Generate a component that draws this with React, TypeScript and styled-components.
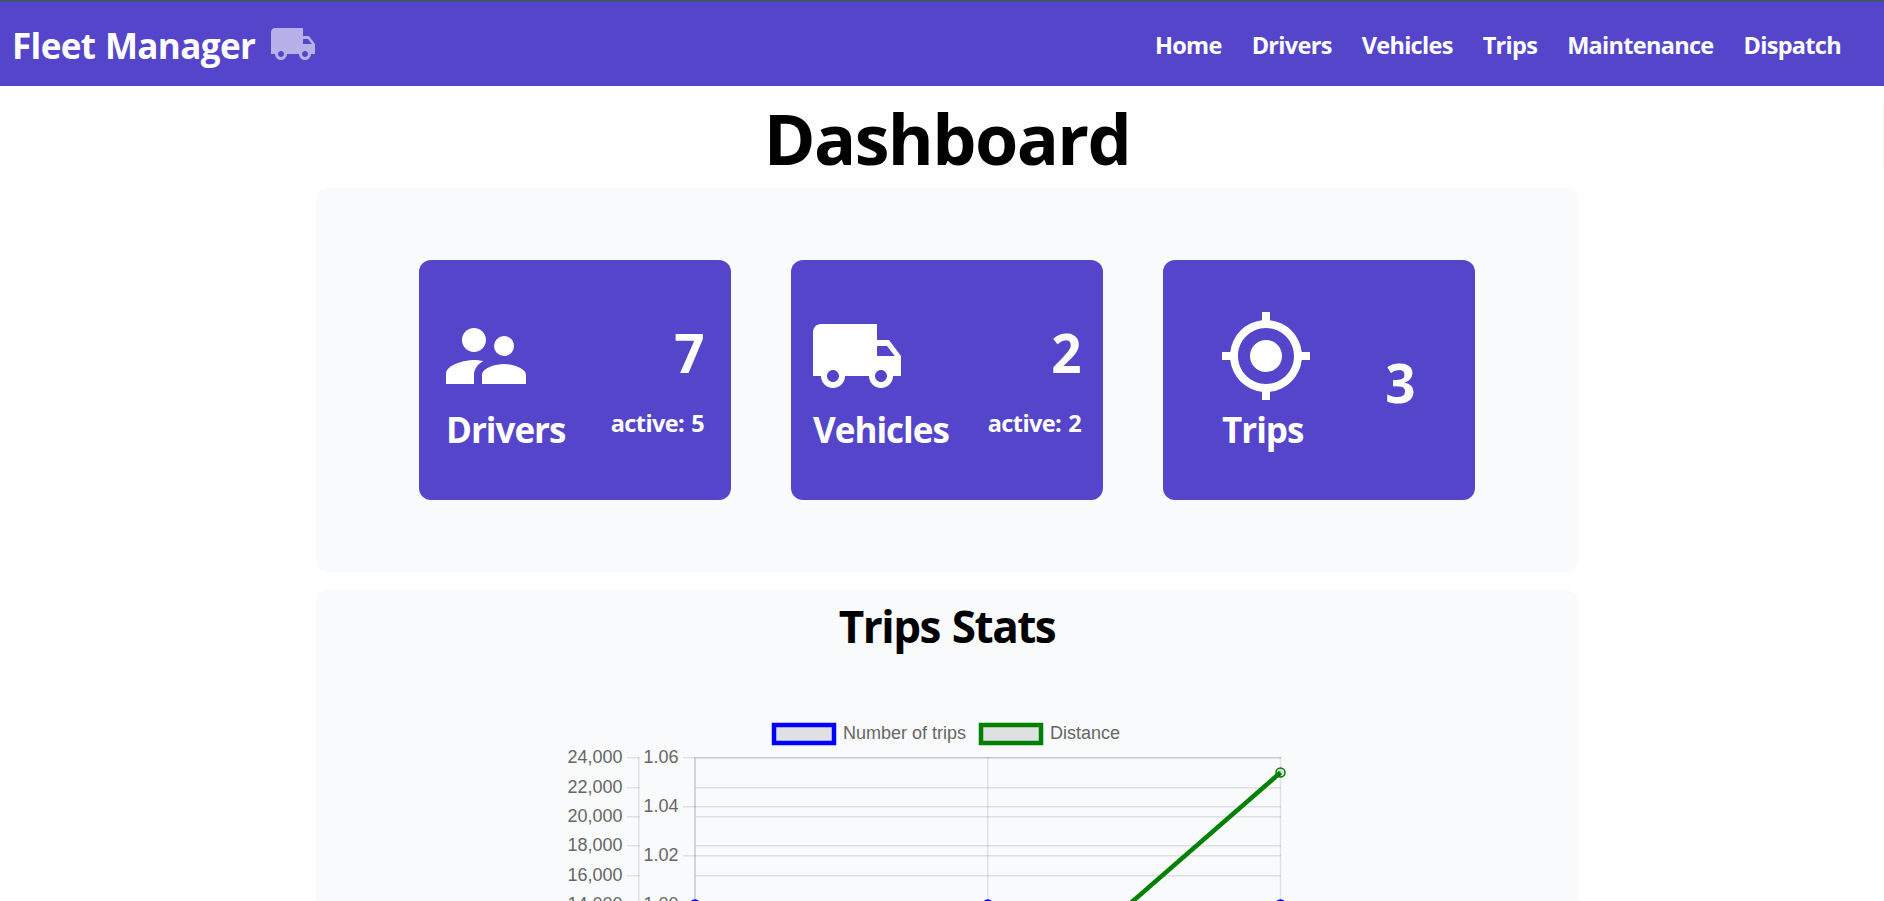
import React from "react";
import styled, { createGlobalStyle } from "styled-components";
import { MdLocalShipping, MdSupervisorAccount, MdGpsFixed } from "react-icons/md";
import type { IconType } from "react-icons";

const Global = createGlobalStyle`
  * { box-sizing: border-box; }
  html, body { margin: 0; padding: 0; height: 901px; overflow: hidden; background: #fff; }
  body { font-family: "Open Sans", "Noto Sans", sans-serif; font-weight: 700; color: #000; }
  h1, h2, p { margin: 0; font-weight: 700; }
`;

const Page = styled.div`
  position: relative;
  width: 1884px;
  height: 901px;
  overflow: hidden;
  display: flex;
  flex-direction: column;
  border-top: 2px solid #3d5577;
`;

const EdgeMark = styled.div`
  position: absolute;
  top: 103px;
  right: 0;
  width: 1px;
  height: 62px;
  background: #f4f4f4;
`;

const Header = styled.header`
  flex: none;
  height: 84px;
  background: #5545cb;
  color: #fff;
  display: flex;
  align-items: center;
  justify-content: space-between;
  padding: 0 43px 0 11px;
`;

const Brand = styled.div`
  display: flex;
  align-items: center;
  gap: 14px;
  white-space: nowrap;
  svg { color: rgba(255, 255, 255, 0.58); }
`;

const BrandName = styled.span`
  padding: 4px 0 0 1px;
  font-size: 35px;
  line-height: 48px;
  letter-spacing: -0.6px;
  word-spacing: 1px;
`;

const Nav = styled.nav`
  display: flex;
  gap: 30px;
  padding-top: 2px;
  font-size: 23.5px;
  line-height: 32px;
  letter-spacing: -0.7px;
`;

const NavLink = styled.a`
  color: #fff;
  white-space: nowrap;
`;

const Main = styled.main`
  flex: none;
  width: 1262px;
  margin-left: 316px;
  display: flex;
  flex-direction: column;
`;

const Title = styled.h1`
  height: 102px;
  font-size: 70px;
  line-height: 104px;
  letter-spacing: -1.6px;
  text-align: center;
`;

const Panel = styled.section`
  background: #f9fafc;
  border-radius: 12px;
`;

const Cards = styled(Panel)`
  height: 384px;
  display: flex;
  gap: 60px;
  justify-content: center;
  align-items: center;
`;

const Card = styled.article<{ $left: number; $right: number }>`
  width: 312px;
  height: 240px;
  border-radius: 12px;
  background: #5545cb;
  color: #fff;
  display: flex;
  justify-content: space-between;
  padding: 48px ${(p) => p.$right}px 0 ${(p) => p.$left}px;
`;

const CardSide = styled.div`
  display: flex;
  flex-direction: column;
`;

const CardLabel = styled.div<{ $indent: number }>`
  margin: 2px 0 0 ${(p) => p.$indent}px;
  font-size: 35px;
  line-height: 48px;
  letter-spacing: -1px;
`;

const CardFigures = styled.div<{ $single: boolean }>`
  display: flex;
  flex-direction: column;
  align-items: flex-end;
  gap: 18px;
  padding-top: ${(p) => (p.$single ? 39 : 9)}px;
`;

const Count = styled.div`
  font-size: 53px;
  line-height: 72px;
  letter-spacing: -0.6px;
`;

const Active = styled.div`
  font-size: 23.5px;
  line-height: 32px;
  letter-spacing: -0.6px;
  word-spacing: 1.5px;
`;

const Stats = styled(Panel)`
  height: 600px;
  margin-top: 18px;
  display: flex;
  flex-direction: column;
  align-items: center;
`;

const StatsTitle = styled.h2`
  font-size: 44px;
  line-height: 60px;
  height: 125px;
  padding-top: 6px;
  letter-spacing: -1.5px;
  word-spacing: 2px;
`;

const Chart = styled.svg`
  display: block;
  font-family: "Liberation Sans", Arial, sans-serif;
  font-weight: 400;
  font-size: 18px;
`;

const links = ["Home", "Drivers", "Vehicles", "Trips", "Maintenance", "Dispatch"];

type CardData = {
  icon: IconType;
  label: string;
  count: number;
  active?: number;
  left: number;
  right: number;
  indent: number;
};

const cards: CardData[] = [
  { icon: MdSupervisorAccount, label: "Drivers", count: 7, active: 5, left: 19, right: 27, indent: 8 },
  { icon: MdLocalShipping, label: "Vehicles", count: 2, active: 2, left: 17.5, right: 22, indent: 4.5 },
  { icon: MdGpsFixed, label: "Trips", count: 3, left: 55, right: 60, indent: 4 },
];

const distanceTicks = [
  ["24,000", 757.75],
  ["22,000", 787.75],
  ["20,000", 816.75],
  ["18,000", 845.75],
  ["16,000", 875.75],
  ["14,000", 904.75],
] as const;

const tripTicks = [
  ["1.06", 757.75],
  ["1.04", 806.75],
  ["1.02", 855.75],
  ["1.00", 904.75],
] as const;

const columns = [695, 987.8, 1280.5];
const GRID = "rgba(0,0,0,0.1)";
const AXIS = "rgba(0,0,0,0.2)";

function TripsChart() {
  return (
    <Chart width="774" height="186" viewBox="560 715 774 186">
      <g fill="rgba(0,0,0,0.1)" strokeWidth="4.5">
        <rect x="774" y="725" width="60" height="18" stroke="#0000ff" />
        <rect x="981" y="725" width="60" height="18" stroke="#008000" />
      </g>
      <g fill="#666">
        <text x="843" y="739.3">Number of trips</text>
        <text x="1050" y="739.3">Distance</text>
        {distanceTicks.map(([t, y]) => (
          <text key={t} x="622.5" y={y + 5} textAnchor="end">{t}</text>
        ))}
        {tripTicks.map(([t, y]) => (
          <text key={t} x="678.5" y={y + 5} textAnchor="end">{t}</text>
        ))}
      </g>
      <g strokeWidth="1.5" fill="none">
        {distanceTicks.map(([t, y]) => (
          <path key={t} stroke={GRID} d={y < 760 ? `M627 ${y}H639.5` : `M627 ${y}H639.5M695.5 ${y}H1281`} />
        ))}
        {tripTicks.map(([t, y]) => (
          <path key={t} stroke={GRID} d={y < 760 ? `M683 ${y}H695` : `M683 ${y}H1281`} />
        ))}
        <path stroke={GRID} d="M638.8 757V901M987.8 757V901M1280.5 757V901" />
        <path stroke={AXIS} d="M695 757V901M695 757.75H1281" />
      </g>
      <path d="M987.8 1027.5L1280.5 772.5" stroke="#008000" strokeWidth="4.5" fill="none" />
      <circle cx="1280.5" cy="772.5" r="4.5" fill="rgba(0,0,0,0.1)" stroke="#008000" strokeWidth="1.5" />
      {columns.map((x) => (
        <circle key={x} cx={x} cy="904.5" r="4.5" fill="#0000ff" stroke="#0000ff" strokeWidth="1.5" />
      ))}
    </Chart>
  );
}

export default function App() {
  return (
    <>
      <Global />
      <Page>
        <Header>
          <Brand>
            <BrandName>Fleet Manager</BrandName>
            <MdLocalShipping size={48} />
          </Brand>
          <Nav>{links.map((l) => <NavLink key={l}>{l}</NavLink>)}</Nav>
        </Header>
        <Main>
          <Title>Dashboard</Title>
          <Cards>
            {cards.map(({ icon: Icon, label, count, active, left, right, indent }) => (
              <Card key={label} $left={left} $right={right}>
                <CardSide>
                  <Icon size={96} />
                  <CardLabel $indent={indent}>{label}</CardLabel>
                </CardSide>
                <CardFigures $single={active === undefined}>
                  <Count>{count}</Count>
                  {active !== undefined && <Active>active: {active}</Active>}
                </CardFigures>
              </Card>
            ))}
          </Cards>
          <Stats>
            <StatsTitle>Trips Stats</StatsTitle>
            <TripsChart />
          </Stats>
        </Main>
        <EdgeMark />
      </Page>
    </>
  );
}
